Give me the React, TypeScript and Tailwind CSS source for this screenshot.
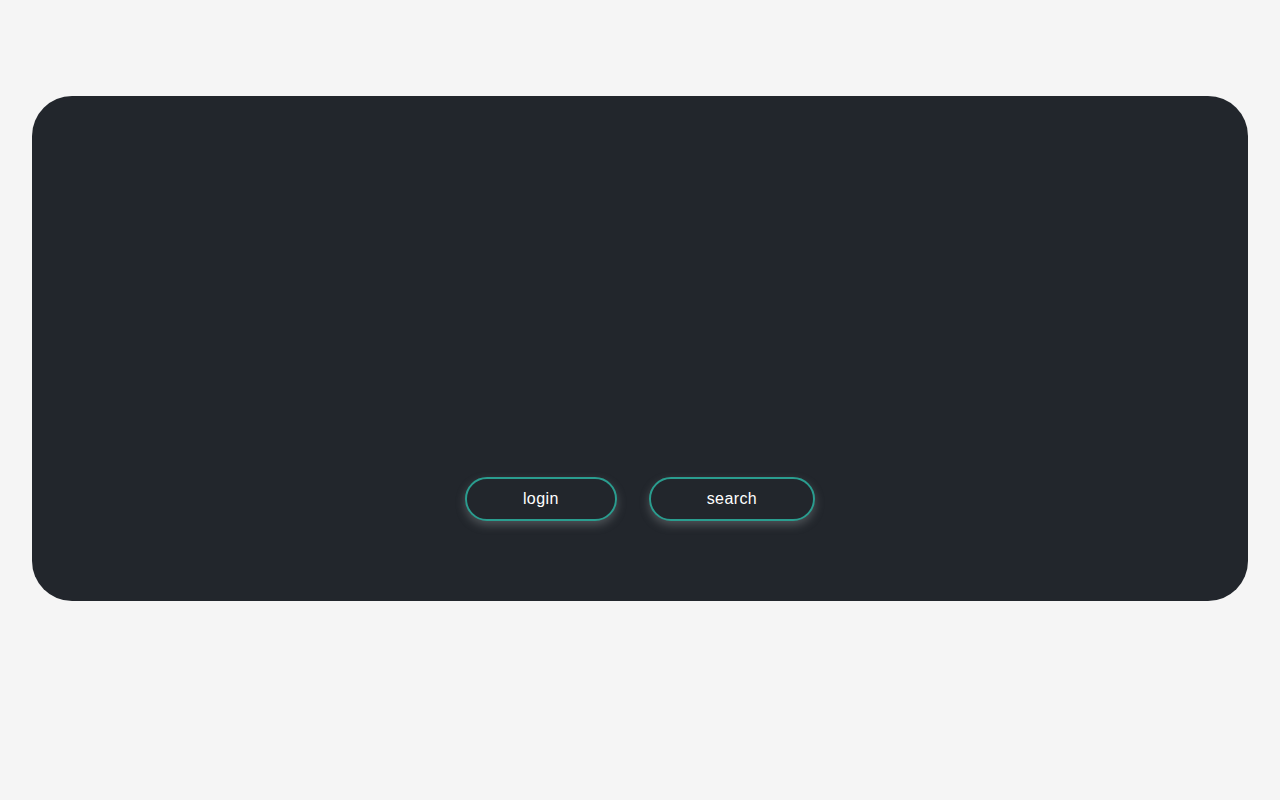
const App = () => {
  return (
    <div className="min-h-screen w-full bg-[#f5f5f5] pt-[96px] px-8" style={{ fontFamily: '"Liberation Sans", Arial, sans-serif' }}>
      <div className="h-[505px] w-full rounded-[40px] bg-[#22262c] flex flex-col justify-end items-center pb-[80px]">
        <div className="flex gap-8">
          <button className="rounded-full border-2 border-[#2a9d8f] bg-[#22262c] px-[56px] py-2 text-base text-white tracking-wide shadow-[0_4px_10px_rgba(160,170,170,0.35)]">
            login
          </button>
          <button className="rounded-full border-2 border-[#2a9d8f] bg-[#22262c] px-[56px] py-2 text-base text-white tracking-wide shadow-[0_4px_10px_rgba(160,170,170,0.35)]">
            search
          </button>
        </div>
      </div>
    </div>
  );
};

export default App;
